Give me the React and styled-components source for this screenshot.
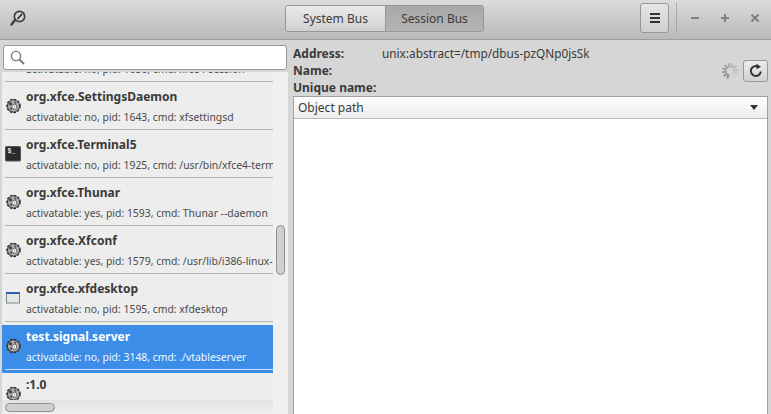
import React from 'react';
import styled, { createGlobalStyle } from 'styled-components';

const Global = createGlobalStyle`
  html, body { margin: 0; padding: 0; overflow: hidden; }
  body { font-family: "Noto Sans", sans-serif; font-size: 12px; color: #3a3a3a; }
`;
const Window = styled.div`
  width: 771px; height: 414px; display: flex; flex-direction: column; background: #d6d6d6; overflow: hidden;
`;
const HeaderBar = styled.header`
  height: 40px; box-sizing: border-box; flex: none; padding-bottom: 3px;
  display: grid; grid-template-columns: 285px 199px 1fr; align-items: center;
  background: linear-gradient(#dcdcdc, #b9b9b9); border-bottom: 1px solid #9d9d9d;
`;
const AppIcon = styled.div` margin-left: 9px; width: 18px; height: 18px; `;
const BusSwitch = styled.div`
  display: flex; height: 27px; box-sizing: border-box; margin-top: 1px;
  border: 1px solid #979797; border-radius: 3px; overflow: hidden;
`;
const BusButton = styled.div`
  flex: ${p => p.$active ? '1' : 'none'}; width: 99px; display: flex; align-items: center; justify-content: center; font-size: 12px; color: #3c3c3c;
  background: ${p => p.$active ? 'linear-gradient(#a9a9a9, #b3b3b3)' : 'linear-gradient(#ebebeb, #d0d0d0)'};
  ${p => p.$active && 'border-left: 1px solid #979797;'}
`;
const Controls = styled.div` justify-self: end; display: flex; align-items: center; padding-right: 8px; `;
const MenuButton = styled.div`
  width: 29px; height: 30px; box-sizing: border-box; border: 1px solid #979797; border-radius: 3px;
  background: linear-gradient(#e6e6e6, #cfcfcf); display: flex; align-items: center; justify-content: center;
`;
const Divider = styled.div` width: 1px; height: 30px; background: #a8a8a8; margin: 0 10px 0 7px; `;
const WinButtons = styled.div` display: flex; gap: 14px; `;
const WinButton = styled.div` width: 16px; height: 16px; display: flex; align-items: center; justify-content: center; `;
const Body = styled.div` flex: 1; display: flex; min-height: 0; `;
const LeftPane = styled.aside`
  width: 286px; flex: none; margin: 0 5px 0 2px; display: flex; flex-direction: column;
`;
const SearchBar = styled.div` height: 32px; box-sizing: border-box; flex: none; padding: 5px 1px 2px 1px; `;
const SearchBox = styled.div`
  height: 25px; box-sizing: border-box; width: 284px;
  background: #fff; border: 1px solid #979797; border-radius: 3px; display: flex; align-items: center; padding-left: 6px;
`;
const ListArea = styled.div` flex: 1; min-height: 0; position: relative; background: #f0f0f0; overflow: hidden; `;
const List = styled.div` width: 271px; height: 100%; background: #ededed; overflow: hidden; `;
const ListContent = styled.div` margin-top: -35px; `;
const Row = styled.div`
  height: 48px; flex: none; display: flex; align-items: flex-start; padding-left: 3px; position: relative;
  background: ${p => p.$sel ? '#3b8de8' : 'transparent'}; color: ${p => p.$sel ? '#fff' : '#3a3a3a'};
  &::after { content: ''; position: absolute; left: 3px; right: 0; top: 44px; height: 1px; background: ${p => p.$sel ? '#cfe2f8' : '#b4b4b4'}; }
`;
const RowIcon = styled.div` width: 16px; height: 16px; margin: 13px 5px 0 0; flex: none; `;
const RowText = styled.div` white-space: nowrap; overflow: hidden; flex: 1; padding-top: 3px; `;
const RowName = styled.div` font-weight: 700; font-size: 12px; line-height: 17px; min-height: 17px; margin-bottom: 5px; `;
const RowInfo = styled.div` font-size: 10.4px; line-height: 15px; color: ${p => p.$sel ? '#f2f7fe' : '#4a4a4a'}; `;
const ScrollV = styled.div`
  position: absolute; left: 274px; top: 153px; width: 9px; height: 50px; box-sizing: border-box;
  background: #d0d0d0; border: 1px solid #8e8e8e; border-radius: 5px;
`;
const Fade = styled.div`
  position: absolute; left: 0; width: 271px; bottom: 0; height: 14px;
  background: linear-gradient(#e2e2e2, #efefef);
`;
const ScrollH = styled.div`
  position: absolute; left: 3px; bottom: 2px; width: 50px; height: 9px; box-sizing: border-box;
  background: #d0d0d0; border: 1px solid #8e8e8e; border-radius: 5px;
`;
const RightPane = styled.main` flex: 1; min-width: 0; display: flex; flex-direction: column; padding: 5px 3px 0 0; `;
const InfoHead = styled.div` display: flex; align-items: center; height: 51px; flex: none; `;
const InfoRows = styled.div` flex: 1; `;
const InfoRow = styled.div` height: 17px; line-height: 17px; display: flex; font-size: 12px; `;
const InfoLabel = styled.div` width: 89px; font-weight: 700; white-space: nowrap; `;
const InfoValue = styled.div` font-size: 11.8px; `;
const Spinner = styled.div` width: 18px; height: 18px; margin-right: 4px; `;
const RefreshButton = styled.div`
  width: 25px; height: 22px; box-sizing: border-box;
  border: 1px solid #979797; border-radius: 3px; background: linear-gradient(#ececec, #d2d2d2);
  display: flex; align-items: center; justify-content: center;
`;
const TreeBox = styled.div` flex: 1; background: #fff; border: 1px solid #a0a0a0; border-bottom: none; `;
const TreeHeader = styled.div`
  height: 22px; box-sizing: border-box; border-bottom: 1px solid #b9b9b9; background: linear-gradient(#fdfdfd, #ececec);
  display: flex; align-items: center; justify-content: space-between; padding: 0 9px 0 4px; font-size: 12px;
`;
const Caret = styled.div` width: 0; height: 0; border-left: 4px solid transparent; border-right: 4px solid transparent; border-top: 5px solid #333; `;

const Gear = () => (
  <svg width="16" height="16" viewBox="0 0 16 16">
    <circle cx="8.5" cy="8" r="6.6" fill="none" stroke="#333" strokeWidth="1.4" strokeDasharray="2.6 1.3" />
    <circle cx="8.5" cy="8" r="6" fill="#b4b4b4" stroke="#333" strokeWidth="0.9" />
    <circle cx="5.4" cy="5.8" r="1.7" fill="#444" />
    <circle cx="10.2" cy="4.6" r="1.2" fill="#555" />
    <circle cx="6" cy="10.6" r="1.2" fill="#555" />
    <circle cx="9.4" cy="8.8" r="2.5" fill="#f6f6f6" stroke="#333" strokeWidth="0.7" />
    <circle cx="9.4" cy="8.8" r="0.7" fill="#888" />
  </svg>
);
const Term = () => (
  <svg width="16" height="16" viewBox="0 0 16 16">
    <rect x="0.5" y="0.5" width="15" height="14.5" rx="1" fill="#2b2b2b" stroke="#555" />
    <text x="2.5" y="7" fontSize="6.5" fontWeight="700" fill="#eee" fontFamily="Liberation Mono">$_</text>
  </svg>
);
const Win = () => (
  <svg width="16" height="16" viewBox="0 0 16 16">
    <rect x="1.5" y="2.5" width="13" height="10.5" fill="#e5e8df" stroke="#7b8590" />
    <rect x="1" y="2" width="14" height="2" fill="#2f5fa8" />
  </svg>
);
const Spin = () => (
  <svg width="18" height="18" viewBox="0 0 18 18">
    {Array.from({ length: 12 }).map((_, i) => {
      const v = 135 + i * 7;
      return <line key={i} x1="9" y1="1" x2="9" y2="5.5" stroke={`rgb(${v},${v},${v})`} strokeWidth="2" transform={`rotate(${200 + i * 30} 9 9)`} />;
    })}
  </svg>
);

const rows = [
  { n: '', i: 'activatable: no, pid: 1656, cmd: xfce4-session', c: null },
  { n: 'org.xfce.SettingsDaemon', i: 'activatable: no, pid: 1643, cmd: xfsettingsd', c: Gear },
  { n: 'org.xfce.Terminal5', i: 'activatable: no, pid: 1925, cmd: /usr/bin/xfce4-terminal', c: Term },
  { n: 'org.xfce.Thunar', i: 'activatable: yes, pid: 1593, cmd: Thunar --daemon', c: Gear },
  { n: 'org.xfce.Xfconf', i: 'activatable: yes, pid: 1579, cmd: /usr/lib/i386-linux-gnu/xfce4', c: Gear },
  { n: 'org.xfce.xfdesktop', i: 'activatable: no, pid: 1595, cmd: xfdesktop', c: Win },
  { n: 'test.signal.server', i: 'activatable: no, pid: 3148, cmd: ./vtableserver', c: Gear, sel: true },
  { n: ':1.0', i: '', c: Gear },
];

export default function App() {
  return (
    <Window>
      <Global />
      <HeaderBar>
        <AppIcon>
          <svg width="18" height="18" viewBox="0 0 18 18">
            <path d="M6 11 L2.5 15.5" stroke="#444" strokeWidth="2.6" strokeLinecap="round" />
            <circle cx="10.5" cy="7.5" r="6" fill="#3d3d3d" />
            <circle cx="10.5" cy="7.5" r="4.3" fill="#d2d2d2" />
            <path d="M8.5 10 L13 5" stroke="#222" strokeWidth="1.5" />
          </svg>
        </AppIcon>
        <BusSwitch>
          <BusButton>System Bus</BusButton>
          <BusButton $active>Session Bus</BusButton>
        </BusSwitch>
        <Controls>
          <MenuButton>
            <svg width="12" height="12" viewBox="0 0 12 12"><path d="M1 2h10M1 6h10M1 10h10" stroke="#333" strokeWidth="2" /></svg>
          </MenuButton>
          <Divider />
          <WinButtons>
            <WinButton><svg width="10" height="10"><path d="M1 5h8" stroke="#808080" strokeWidth="2" /></svg></WinButton>
            <WinButton><svg width="10" height="10"><path d="M1 5h8M5 1v8" stroke="#808080" strokeWidth="2" /></svg></WinButton>
            <WinButton><svg width="10" height="10"><path d="M1.5 1.5l7 7M8.5 1.5l-7 7" stroke="#808080" strokeWidth="2" /></svg></WinButton>
          </WinButtons>
        </Controls>
      </HeaderBar>
      <Body>
        <LeftPane>
          <SearchBar>
            <SearchBox>
              <svg width="15" height="15" viewBox="0 0 15 15" fill="none" stroke="#777" strokeWidth="1.4">
                <circle cx="6" cy="6" r="4.6" /><path d="M9.5 9.5l4.5 4.5" strokeWidth="1.8" />
              </svg>
            </SearchBox>
          </SearchBar>
          <ListArea>
            <List>
              <ListContent>
                {rows.map((r, k) => (
                  <Row key={k} $sel={r.sel}>
                    <RowIcon>{r.c && <r.c />}</RowIcon>
                    <RowText>
                      <RowName>{r.n}</RowName>
                      {r.i && <RowInfo $sel={r.sel}>{r.i}</RowInfo>}
                    </RowText>
                  </Row>
                ))}
              </ListContent>
            </List>
            <ScrollV />
            <Fade />
            <ScrollH />
          </ListArea>
        </LeftPane>
        <RightPane>
          <InfoHead>
            <InfoRows>
              <InfoRow><InfoLabel>Address:</InfoLabel><InfoValue>unix:abstract=/tmp/dbus-pzQNp0jsSk</InfoValue></InfoRow>
              <InfoRow><InfoLabel>Name:</InfoLabel></InfoRow>
              <InfoRow><InfoLabel>Unique name:</InfoLabel></InfoRow>
            </InfoRows>
            <Spinner><Spin /></Spinner>
            <RefreshButton>
              <svg width="16" height="16" viewBox="0 0 16 16" fill="none" stroke="#333" strokeWidth="2">
                <path d="M12.8 8.5a5 5 0 1 1-2.6-4.9" /><path d="M8.5 0.8L13 3.8 8.5 6.3z" fill="#333" stroke="none" />
              </svg>
            </RefreshButton>
          </InfoHead>
          <TreeBox>
            <TreeHeader>Object path<Caret /></TreeHeader>
          </TreeBox>
        </RightPane>
      </Body>
    </Window>
  );
}
